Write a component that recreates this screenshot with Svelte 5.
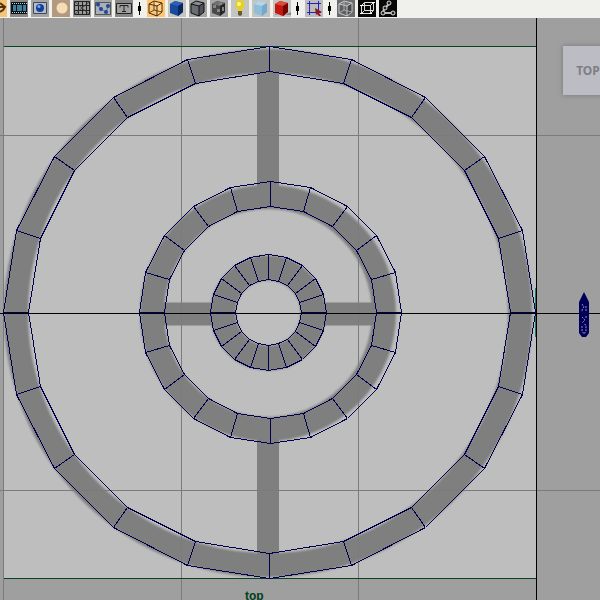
<script>
  const point = (cx, cy, r, i) => {
    const a = (i * Math.PI) / 10 - Math.PI / 2;
    return [Math.round(cx + r * Math.cos(a)) + 0.5, Math.round(cy + r * Math.sin(a)) + 0.5];
  };
  const sides = Array.from({ length: 20 }, (_, i) => i);
  const meshes = [
    { cx: 269, cy: 312, outer: 266, inner: 241 },
    { cx: 270, cy: 312, outer: 131, inner: 106 },
    { cx: 268, cy: 312, outer: 58, inner: 33 }
  ].map(({ cx, cy, outer, inner }) => {
    const a = sides.map((i) => point(cx, cy, outer, i));
    const b = sides.map((i) => point(cx, cy, inner, i));
    return { a, b };
  });

  const tools = [
    { id: 'film', label: 'Film gate' },
    { id: 'sphere', label: 'Shaded sphere' },
    { id: 'disc', label: 'Flat shading' },
    { id: 'mesh', label: 'Grid' },
    { id: 'nodes', label: 'Points' },
    { id: 'text', label: 'Text' },
    { id: 'sep' },
    { id: 'wire', label: 'Wireframe' },
    { id: 'blue', label: 'Smooth shade' },
    { id: 'edges', label: 'Wireframe on shaded' },
    { id: 'checker', label: 'Textured' },
    { id: 'bulb', label: 'Use all lights' },
    { id: 'ice', label: 'Shadows' },
    { id: 'red', label: 'High quality' },
    { id: 'sep' },
    { id: 'select', label: 'Isolate select' },
    { id: 'sep' },
    { id: 'xray', label: 'X-ray' },
    { id: 'frame', label: 'X-ray active components' },
    { id: 'joints', label: 'X-ray joints' }
  ];
</script>

{#snippet cube(top, left, right, line)}
  <path d="M2 4L7 1L15 3V12L10 16L2 13Z" fill={left} />
  <path d="M2 4L7 1L15 3L10 6Z" fill={top} />
  <path d="M10 6L15 3V12L10 16Z" fill={right} />
  {#if line}<path d="M2 4L7 1L15 3V12L10 16L2 13ZM2 4L10 6L15 3M10 6V16" fill="none" stroke={line} />{/if}
{/snippet}

<main>
  <header role="toolbar" aria-label="Panel tools">
    <button class="cut" aria-label="Camera">
      <svg viewBox="0 0 7 17"><path d="M0 3L5 7L3 10L0 12M0 7H4" fill="none" stroke="#54310d" stroke-width="2" /></svg>
    </button>
    {#each tools as { id, label }}
      {#if id === 'sep'}
        <span class="sep"></span>
      {:else}
        <button class={id} aria-label={label}>
          <svg viewBox="0 0 18 17">
            {#if id === 'film'}
              <path d="M1 2H17V14H1Z" fill="#111" />
              <path d="M2 3.5H17M2 12.5H17" stroke="#c9d1cd" stroke-dasharray="1 1" />
              <path d="M3 5H6V11H3ZM7 5H12V11H7ZM13 5H16V11H13Z" fill="#3d82a3" />
            {:else if id === 'sphere'}
              <path d="M2.5 2.5H15.5V13.5H2.5Z" fill="#b4bccb" stroke="#424857" />
              <circle cx="9" cy="8" r="4" fill="#153f9c" /><circle cx="8" cy="6.5" r="1.5" fill="#7ca8e8" />
            {:else if id === 'disc'}
              <circle cx="10" cy="8" r="5.5" fill="#f6dbb4" />
            {:else if id === 'mesh'}
              <path d="M1 1.5H17M1 5.5H17M1 10.5H17M1 14.5H17M1.500 1V15M5.5 1V15M9.5 1V15M13.5 1V15M16.5 1V15" stroke="#222" fill="none" />
              <path d="M1 1L17 15M17 1L1 15" stroke="#444" fill="none" />
            {:else if id === 'nodes'}
              <path d="M1.5 2.5H16.5V14.5H1.5Z" fill="#aab0b8" stroke="#555" />
              <path d="M4 5L7 9L12 12L14 7" stroke="#69738c" fill="none" />
              <g fill="#23469c"><circle cx="4" cy="4.5" r="2" /><circle cx="7" cy="9" r="2" /><circle cx="14" cy="6" r="2" /><circle cx="12" cy="12" r="2" /></g>
            {:else if id === 'text'}
              <path d="M1.5 3.5H16.5V13.5H1.5Z" fill="#a0a0a0" stroke="#222" />
              <path d="M5 7.5V5.5H13V7.500M9 5.5V11.5M7 11.5H11" fill="none" stroke="#222" />
            {:else if id === 'wire'}
              {@render cube('#ffd99a', '#f6c67c', '#ffd28b', '#4b2805')}
              <path d="M7 1V10L2 13M7 10L15 12" fill="none" stroke="#70420e" />
            {:else if id === 'blue'}
              {@render cube('#2862b4', '#174a9b', '#09265f')}
            {:else if id === 'edges'}
              {@render cube('#898b91', '#6b6d75', '#50525a', '#111')}
            {:else if id === 'checker'}
              {@render cube('#727272', '#494949', '#252525')}
              <path d="M3 5H6V8H3ZM7 9H10V12H7ZM9 3H12V5H9ZM12 7H14V11H12Z" fill="#858585" />
            {:else if id === 'bulb'}
              <path d="M9 0C4 0 3 5 6 8L7 11H11L12 8C15 5 14 0 9 0Z" fill="#e4cf28" />
              <circle cx="8" cy="4" r="2" fill="#fff98a" /><path d="M7 11H11V15L9 16L7 15Z" fill="#635d38" />
            {:else if id === 'ice'}
              {@render cube('#b4d5ea', '#8fbedc', '#76a8cb')}
            {:else if id === 'red'}
              <path d="M2 14L10 16L18 12V15H2Z" fill="#888" />
              {@render cube('#dc4a3d', '#c51712', '#750403')}
            {:else if id === 'select'}
              <path d="M4.5 3.5H13.5V12.5H4.5ZM4.5 1V15M13.5 1V15M2 3.5H16M2 12.5H16" fill="none" stroke="#2520bb" />
              <path d="M10 8L17 12L14 13L16 16L14 16L12 14L11 15Z" fill="#8d1722" />
            {:else if id === 'xray'}
              {@render cube('#777b7c', '#5d6162', '#454849', '#c4c9ca')}
              <path d="M7 1V10L2 13M7 10L15 12" fill="none" stroke="#aaa" />
            {:else if id === 'frame'}
              <path d="M3.5 5.5H12.5V13.5H3.5ZM6.5 2.5H15.5V10.5H6.5ZM3.5 5.5L6.5 2.5M12.5 5.5L15.5 2.5M12.5 13.5L15.5 10.5M3.5 13.5L6.5 10.5" fill="none" stroke="#ddd" />
              <path d="M2 5.500H5M2 13.500H5M11 13.500H14M14 2.500H17" stroke="#fff" />
            {:else}
              <path d="M11 3L5 9L4 13L15 13" fill="none" stroke="#bbb" stroke-width="2" />
              <g fill="#222" stroke="#ddd"><circle cx="10" cy="3" r="2" /><circle cx="6" cy="8" r="2" /><circle cx="4" cy="13" r="2" /><circle cx="14" cy="13" r="2" /></g>
            {/if}
          </svg>
        </button>
      {/if}
    {/each}
  </header>

  <section class="viewport" aria-label="Top view">
    <svg class="scene" viewBox="0 18 600 582" preserveAspectRatio="xMidYMid slice" role="img" aria-label="Wheel mesh">
      <defs>
        <filter id="soft"><feGaussianBlur stdDeviation="1" /></filter>
      </defs>
      <rect x="4" y="46" width="532" height="532" fill="#bebebe" />
      <g fill="none" stroke="#7f7f7f">
        <path d="M268 60V195M268 430V566" stroke-width="22" />
        <path d="M153 314H220M317 314H384" stroke-width="23" />
        <g filter="url(#soft)">
          <circle cx="268" cy="313" r="252" stroke-width="24" />
          <circle cx="268" cy="313" r="116" stroke-width="24" />
          <circle cx="268" cy="313" r="45" stroke-width="25" />
        </g>
      </g>
      <g shape-rendering="crispEdges" fill="none">
        <path d="M3.5 18V600M181.5 18V600M358.5 18V600M0 135.5H600M0 490.5H600" stroke="#7b7b7b" />
        <path d="M4 46.5H536M4 578.5H536" stroke="#064521" />
        <path d="M535.5 288V337" stroke="#1f7c58" />
        <g stroke="#00004f">
          {#each meshes as { a, b }}
            <polygon points={a.join(' ')} />
            <polygon points={b.join(' ')} />
            {#each sides as i}
              <line x1={a[i][0]} y1={a[i][1]} x2={b[i][0]} y2={b[i][1]} />
            {/each}
          {/each}
        </g>
        <path d="M536.5 18V600M0 313.5H600" stroke="#000" />
      </g>
      <path d="M584 292L589 302V333L586 337H582L579 333V302Z" fill="#00005b" />
      <path d="M582 304L584 307L582 310V312M586 306V311M582 317L585 320L582 323M586 316V319M582 326V331L584 334L586 331V325L584 324" fill="none" stroke="#8f93b5" stroke-dasharray="2 1" />
    </svg>
    <button class="viewcube">TOP</button>
    <span class="camera">top</span>
  </section>
</main>

<style>
  :global(body) { margin: 0; background: #9f9f9f; overflow: hidden; }
  main { display: flex; flex-direction: column; height: 100vh; font-family: "Liberation Sans", Arial, sans-serif; }
  header { display: flex; align-items: flex-start; gap: 3px; height: 18px; overflow: hidden; background: #f0f0ed; }
  button { flex: none; padding: 0; border: 0; border-radius: 0; }
  header button { width: 18px; height: 17px; background: #a5a5a5; }
  header svg { display: block; width: 100%; height: 17px; }
  header .cut { width: 7px; background: #f5c47b; }
  header .film, header .text { background: #888; }
  header .mesh { background: #9a9a9a; }
  header .disc { background: #b19a80; }
  header .wire { background: #ffc66f; }
  header .blue, header .ice, header .red, header .bulb { background: #c4c4c1; }
  header .select { background: #bcbcbc; }
  header .xray { background: #6b6d6d; }
  header .frame, header .joints { background: #080808; }
  .sep { position: relative; flex: none; width: 8px; height: 17px; background: linear-gradient(#000, #000) 3px 2px / 1px 13px no-repeat; }
  .sep::after { content: ""; position: absolute; left: 2px; top: 6px; width: 3px; height: 5px; background: #000; }
  .viewport { position: relative; flex: 1; min-height: 0; background: #9f9f9f; overflow: hidden; }
  .scene { display: block; width: 100%; height: 100%; }
  .viewcube { position: absolute; top: 28px; right: -13px; width: 50px; height: 49px; background: #bcbdc4; box-shadow: 0 0 5px #777; color: #7e7f84; font: bold 12px "Noto Sans", sans-serif; }
  .camera { position: absolute; bottom: -4px; left: 245px; font-size: 12px; line-height: 16px; font-weight: bold; color: #00401b; }
</style>
